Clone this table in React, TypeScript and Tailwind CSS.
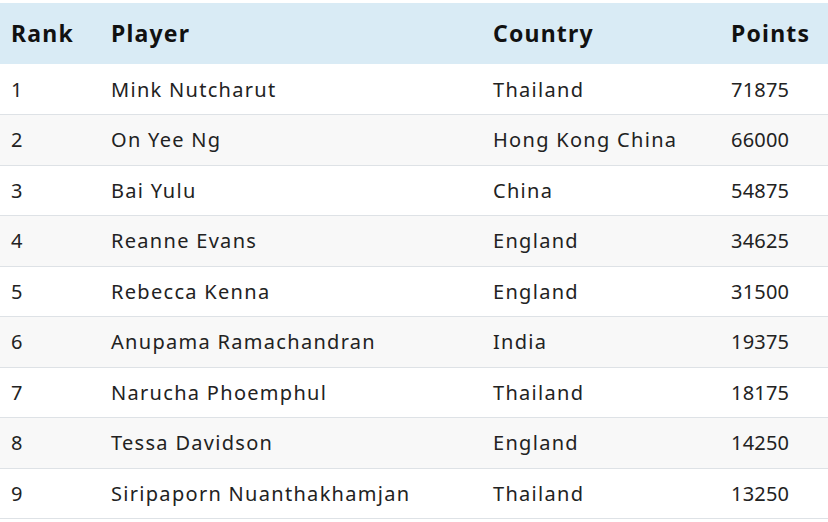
const rows: [number, string, string, string][] = [
  [1, "Mink Nutcharut", "Thailand", "71875"],
  [2, "On Yee Ng", "Hong Kong China", "66000"],
  [3, "Bai Yulu", "China", "54875"],
  [4, "Reanne Evans", "England", "34625"],
  [5, "Rebecca Kenna", "England", "31500"],
  [6, "Anupama Ramachandran", "India", "19375"],
  [7, "Narucha Phoemphul", "Thailand", "18175"],
  [8, "Tessa Davidson", "England", "14250"],
  [9, "Siripaporn Nuanthakhamjan", "Thailand", "13250"],
];

export default function App() {
  return (
    <div className="w-[828px] h-[522px] bg-white overflow-hidden pt-[3px] font-['Noto_Sans',sans-serif] text-[#222]">
      <table className="w-[828px] border-collapse table-fixed">
        <colgroup>
          <col className="w-[100px]" />
          <col className="w-[382px]" />
          <col className="w-[238px]" />
          <col className="w-[108px]" />
        </colgroup>
        <thead>
          <tr className="bg-[#d9ebf5] h-[61px] text-[23px] font-bold text-[#111] tracking-[1.2px]">
            <th className="text-left pl-[11px]">Rank</th>
            <th className="text-left pl-[11px]">Player</th>
            <th className="text-left pl-[11px]">Country</th>
            <th className="text-left pl-[11px]">Points</th>
          </tr>
        </thead>
        <tbody>
          {rows.map(([rank, name, country, pts], i) => (
            <tr
              key={rank}
              className={`h-[50.5px] border-b border-[#dee2e6] text-[20px] tracking-[1.3px] ${i % 2 === 1 ? "bg-[#f8f8f8]" : "bg-white"}`}
            >
              <td className="pl-[11px] pt-[1px]">{rank}</td>
              <td className="pl-[11px] pt-[1px]">{name}</td>
              <td className="pl-[11px] pt-[1px]">{country}</td>
              <td className="pl-[11px] pt-[1px] tracking-[0.2px]">{pts}</td>
            </tr>
          ))}
        </tbody>
      </table>
    </div>
  );
}
